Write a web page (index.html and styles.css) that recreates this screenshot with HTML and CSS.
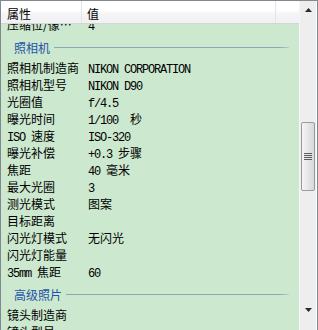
FILE: index.html
```html
<!DOCTYPE html>
<html>
<head>
<meta charset="utf-8">
<link rel="stylesheet" href="styles.css">
</head>
<body>
<div class="listview">
  <div class="main">
    <div class="header">
      <div class="hcol hname">属性</div>
      <div class="hcol hvalue">值</div>
      <div class="hcol hrest"></div>
    </div>
    <div class="viewport">
      <div class="content">
        <div class="row"><div class="name trunc">压缩位/像素的</div><div class="val"><span class="en">4</span></div></div>
        <div class="group"><span class="gtitle">照相机</span><span class="gline"></span></div>
        <div class="row"><div class="name">照相机制造商</div><div class="val"><span class="en">NIKON CORPORATION</span></div></div>
        <div class="row"><div class="name">照相机型号</div><div class="val"><span class="en">NIKON D90</span></div></div>
        <div class="row"><div class="name">光圈值</div><div class="val"><span class="en">f/4.5</span></div></div>
        <div class="row"><div class="name">曝光时间</div><div class="val"><span class="en">1/100  </span>秒</div></div>
        <div class="row"><div class="name"><span class="en">ISO </span>速度</div><div class="val"><span class="en">ISO-320</span></div></div>
        <div class="row"><div class="name">曝光补偿</div><div class="val"><span class="en">+0.3 </span>步骤</div></div>
        <div class="row"><div class="name">焦距</div><div class="val"><span class="en">40 </span>毫米</div></div>
        <div class="row"><div class="name">最大光圈</div><div class="val"><span class="en">3</span></div></div>
        <div class="row"><div class="name">测光模式</div><div class="val">图案</div></div>
        <div class="row"><div class="name">目标距离</div><div class="val"></div></div>
        <div class="row"><div class="name">闪光灯模式</div><div class="val">无闪光</div></div>
        <div class="row"><div class="name">闪光灯能量</div><div class="val"></div></div>
        <div class="row"><div class="name"><span class="en">35mm </span>焦距</div><div class="val"><span class="en">60</span></div></div>
        <div class="group"><span class="gtitle">高级照片</span><span class="gline"></span></div>
        <div class="row"><div class="name">镜头制造商</div><div class="val"></div></div>
        <div class="row"><div class="name">镜头型号</div><div class="val"></div></div>
      </div>
    </div>
  </div>
  <div class="scrollbar">
    <div class="sbtn"><svg width="7" height="4" viewBox="0 0 7 4"><polygon points="3.5,0 7,4 0,4" fill="#2b2b2b"/></svg></div>
    <div class="track">
      <div class="thumb"><div class="grip"></div></div>
    </div>
    <div class="sbtn down"><svg width="7" height="4" viewBox="0 0 7 4"><polygon points="0,0 7,0 3.5,4" fill="#2b2b2b"/></svg></div>
  </div>
</div>
</body>
</html>
```

FILE: styles.css
```css
html, body {
  margin: 0;
  padding: 0;
  overflow: hidden;
  background: #ffffff;
}

.listview {
  box-sizing: border-box;
  width: 318px;
  height: 330px;
  border: 1px solid #838790;
  border-bottom: none;
  display: flex;
  font-family: "Noto Sans CJK SC", "Liberation Sans", sans-serif;
  font-size: 12px;
  color: #000;
  overflow: hidden;
}

.main {
  width: 298px;
  display: flex;
  flex-direction: column;
  background: #cce8cf;
  overflow: hidden;
}

.header {
  box-sizing: border-box;
  height: 23px;
  flex: none;
  display: flex;
  background: linear-gradient(#ffffff 0%, #ffffff 42%, #f4f4f6 60%, #f1f1f3 100%);
  border-bottom: 1px solid #d5d5d5;
}

.hcol {
  box-sizing: border-box;
  height: 22px;
  padding-top: 3px;
  line-height: 19px;
  white-space: nowrap;
}

.hname {
  width: 81px;
  padding-left: 6px;
  border-right: 1px solid #e4e4e6;
}

.hvalue {
  width: 194px;
  padding-left: 5px;
  border-right: 1px solid #e4e4e6;
}

.hrest {
  flex: 1;
}

.viewport {
  flex: 1;
  overflow: hidden;
}

.content {
  margin-top: -8px;
}

.row {
  height: 17px;
  line-height: 17px;
  display: grid;
  grid-template-columns: 81px 1fr;
  white-space: pre;
}

.name {
  padding-left: 6px;
  overflow: hidden;
}

.trunc {
  text-overflow: ellipsis;
  padding-right: 4px;
}

.val {
  padding-left: 6px;
  overflow: hidden;
}

.en {
  font-family: "Liberation Mono", monospace;
  letter-spacing: -1.2px;
  white-space: pre;
}

.group {
  box-sizing: border-box;
  height: 26px;
  padding-top: 2px;
  padding-left: 13px;
  padding-right: 10px;
  display: flex;
  align-items: center;
}

.gtitle {
  color: #1f52a8;
  line-height: 17px;
  white-space: nowrap;
}

.gline {
  flex: 1;
  height: 1px;
  margin-left: 4px;
  background: linear-gradient(to right, #8ea7b6 0%, #8ea7b6 96%, #b9cfc6 100%);
}

.scrollbar {
  width: 17px;
  flex: none;
  display: flex;
  flex-direction: column;
  background: #eeeeee;
  border-left: 1px solid #f6f6f6;
  box-sizing: border-box;
}

.sbtn {
  height: 17px;
  flex: none;
  display: flex;
  align-items: center;
  justify-content: center;
  padding-left: 1px;
}

.sbtn.down {
  margin-bottom: 12px;
}

.track {
  flex: 1;
  display: flex;
  flex-direction: column;
}

.thumb {
  box-sizing: border-box;
  margin-top: 104px;
  margin-left: 1px;
  width: 14px;
  height: 69px;
  border: 1px solid #9a9a9a;
  border-radius: 2px;
  background: linear-gradient(to right, #f6f6f6 0%, #e6e6e8 50%, #d8d8da 100%);
  display: flex;
  align-items: center;
  justify-content: center;
}

.grip {
  width: 8px;
  height: 7px;
  background: repeating-linear-gradient(#5c5c5c 0px, #5c5c5c 1px, transparent 1px, transparent 2px);
}
```
